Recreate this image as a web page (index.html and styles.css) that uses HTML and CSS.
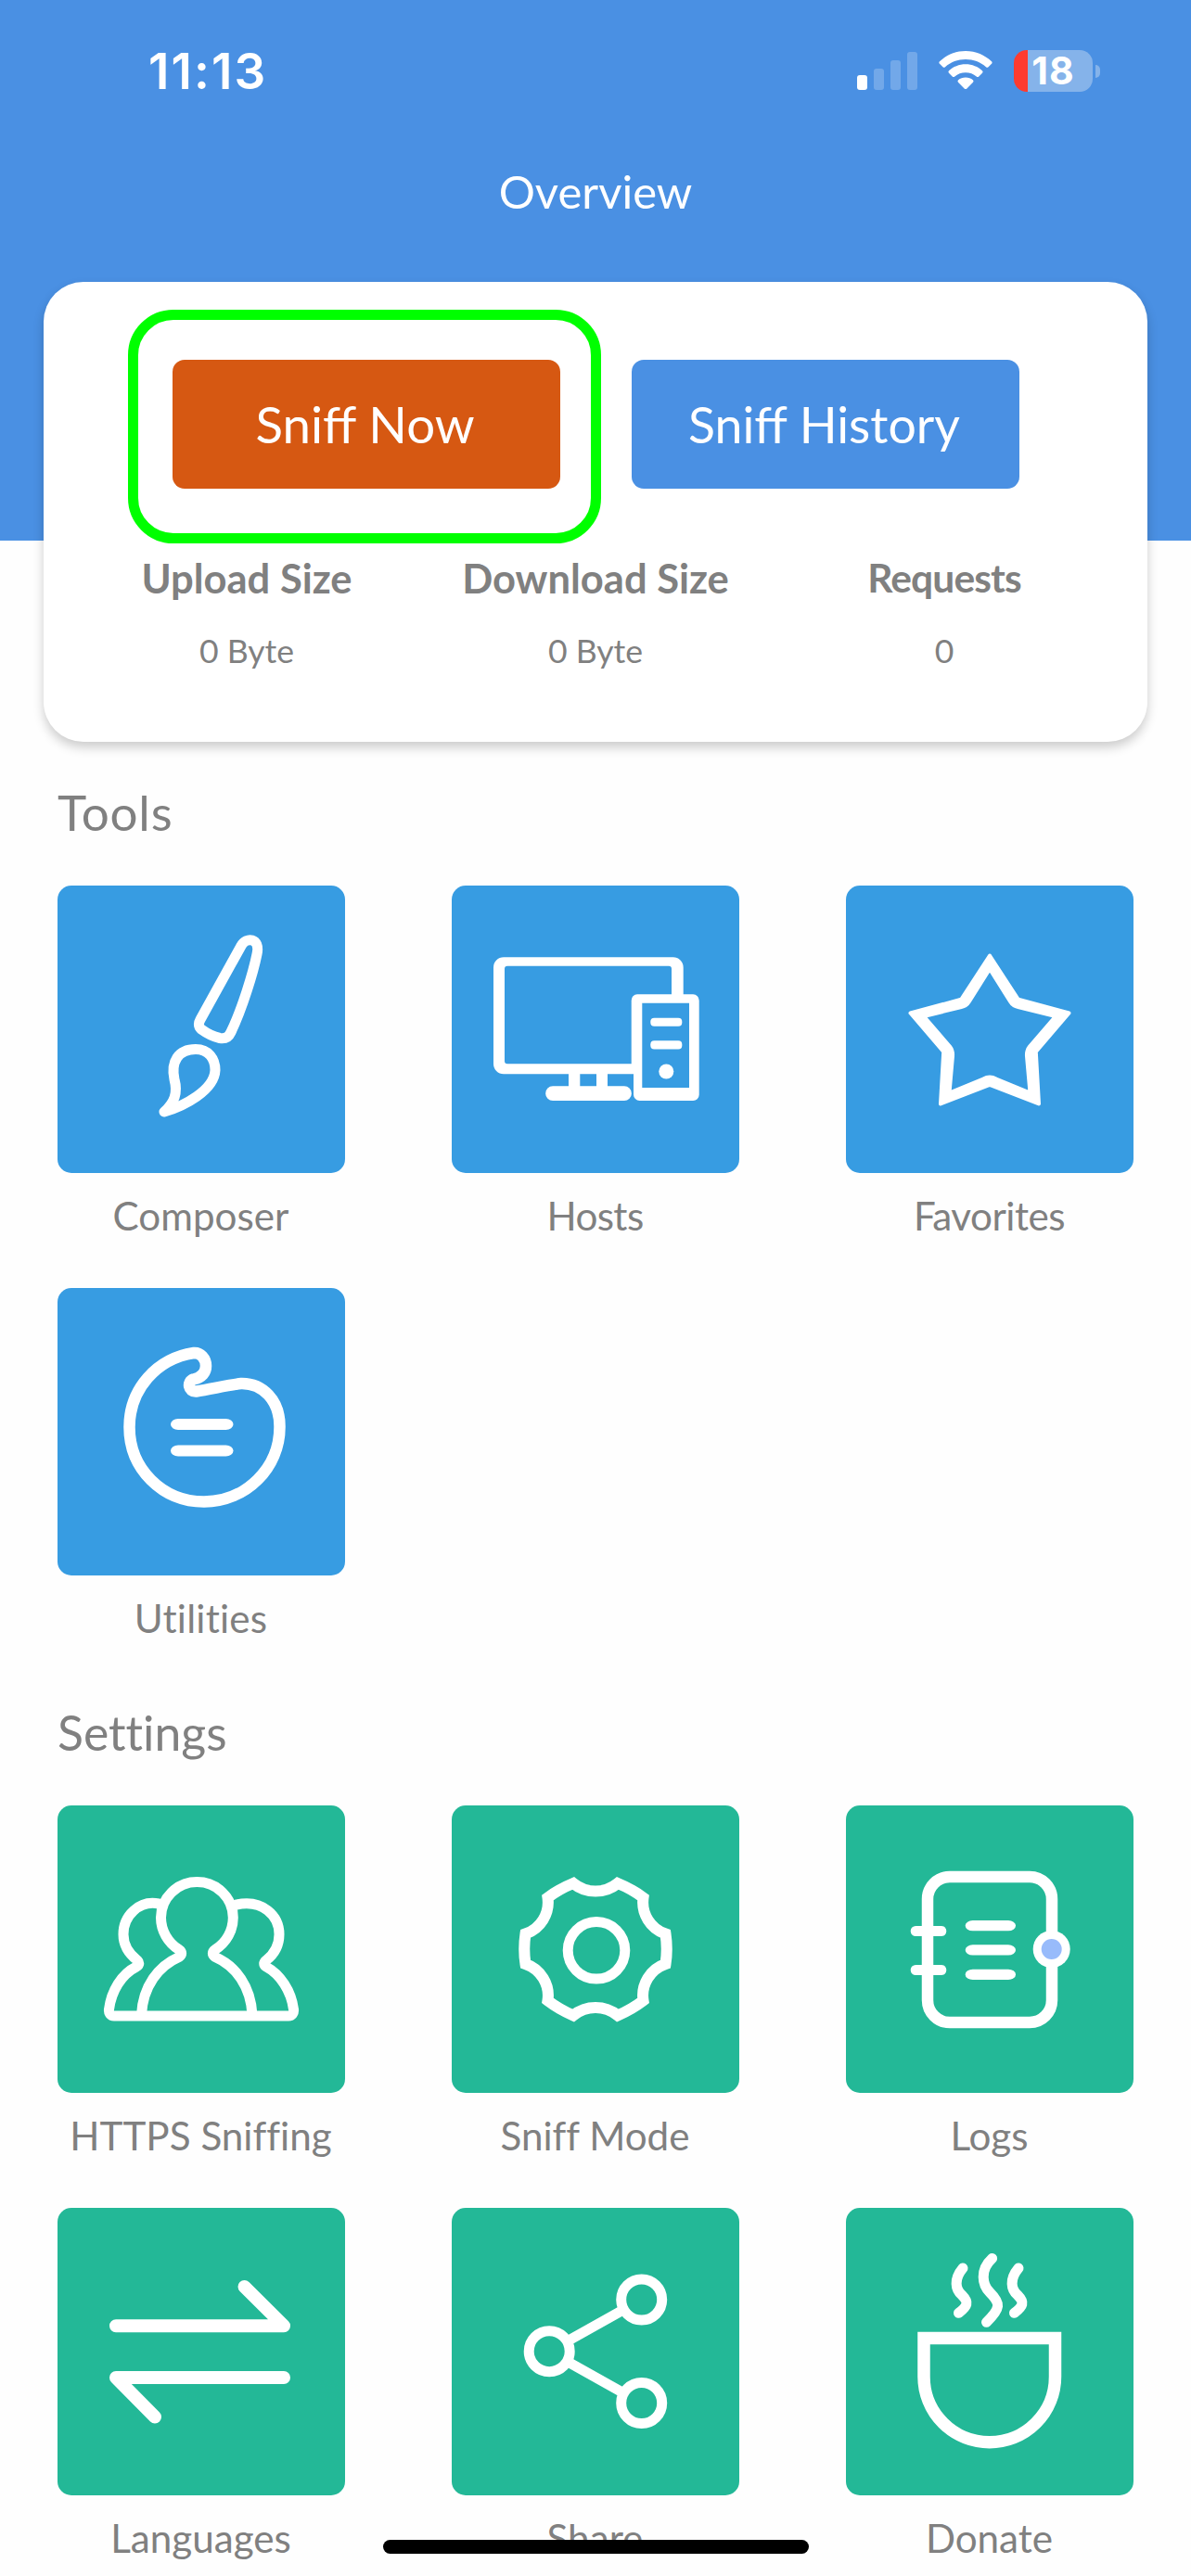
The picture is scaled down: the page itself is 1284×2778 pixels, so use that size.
FILE: index.html
```html
<!DOCTYPE html>
<html lang="en">
<head>
<meta charset="utf-8">
<title>Overview</title>
<link rel="stylesheet" href="styles.css">
</head>
<body>
<header class="top">
  <div class="status">
    <span class="time">11:13</span>
    <div class="indicators">
      <svg class="signal" width="65" height="41" viewBox="0 0 65 41" fill="#fff">
        <rect x="0" y="25" width="11" height="16" rx="3"/>
        <g opacity=".22"><rect x="18" y="18" width="11" height="23" rx="3"/><rect x="36" y="9" width="11" height="32" rx="3"/><rect x="54" y="0" width="11" height="41" rx="3"/></g>
      </svg>
      <svg class="wifi" width="58" height="42" viewBox="0 0 58 42" fill="#fff">
        <path d="M29 0C40 0 50 4.500 57 11.300Q58.200 12.500 57 13.800L53.500 17.200Q52.300 18.300 51 17.200C45 11.800 37.500 9 29 9S13 11.800 7 17.200Q5.700 18.300 4.500 17.200L1 13.800Q-.2 12.500 1 11.300C8 4.500 18 0 29 0Z"/>
        <path d="M29 14.300C36 14.300 42.300 17 47 21.200Q48.300 22.500 47 23.800L43.300 27.400Q42 28.600 40.700 27.400C37.500 24.700 33.500 23.200 29 23.200S20.500 24.700 17.300 27.400Q16 28.600 14.700 27.400L11 23.800Q9.700 22.500 11 21.200C15.700 17 22 14.300 29 14.300Z"/>
        <path d="M29 28.500C32 28.500 34.800 29.500 36.900 31.300Q38.200 32.500 37 33.700L30.400 40.400Q29 41.700 27.600 40.400L21 33.700Q19.800 32.500 21.100 31.300C23.200 29.500 26 28.500 29 28.500Z"/>
      </svg>
      <div class="battery"><span class="charge">18</span></div>
    </div>
  </div>
  <h1 class="title">Overview</h1>
</header>

<section class="card">
  <div class="actions">
    <button class="button sniff-now">Sniff Now</button>
    <button class="button sniff-history">Sniff History</button>
  </div>
  <div class="stats">
    <div class="stat"><b class="stat-name">Upload Size</b><span class="stat-value">0 Byte</span></div>
    <div class="stat"><b class="stat-name">Download Size</b><span class="stat-value">0 Byte</span></div>
    <div class="stat"><b class="stat-name narrow">Requests</b><span class="stat-value">0</span></div>
  </div>
</section>

<main class="content">
  <section class="group">
    <h2 class="heading heading-tools">Tools</h2>
    <div class="grid">
      <div class="item">
        <svg class="tile blue" viewBox="0 0 310 310">
          <path class="line" d="M198 65C203 55 219 56 215 74C211 94 199 133 187 158C184.500 163.500 181 165.500 175 164.500C168 163 160.500 159 155 155C152 152 151.500 149 154 144.500Z"/>
          <path class="line" d="M115 244C126 234 130 224 126 209C122 190 130 176.500 149 176.500C163 176.500 170 187 170 199C169 221 136 238 115 244Z"/>
        </svg>
        <span class="label">Composer</span>
      </div>
      <div class="item">
        <svg class="tile blue" viewBox="0 0 310 310">
          <path fill="#fff" fill-rule="evenodd" d="M56 77.300H238.500A11 11 0 0 1 249.700 88.500V120H237V89.700A3 3 0 0 0 234 86.700H60A3 3 0 0 0 57 89.700V189.300A3 3 0 0 0 60 192.300H200V203.300H56A11 11 0 0 1 45 192V88.500A11 11 0 0 1 56 77.300Z"/>
          <path fill="#fff" d="M126 203H138.300V216.300H156V203H168V216.300H186A7.800 7.800 0 0 1 186 232H109A7.800 7.800 0 0 1 109 216.300H126Z"/>
          <path fill="#fff" fill-rule="evenodd" d="M200 117.300H260A6.500 6.500 0 0 1 266.700 124V225.500A6.500 6.500 0 0 1 260 232H202.500A6.500 6.500 0 0 1 196 225.500V202H193.700V124A6.500 6.500 0 0 1 200 117.300ZM205.300 126.700V218H256V126.700Z"/>
          <g fill="#fff"><rect x="214.300" y="142.700" width="34" height="9" rx="4"/><rect x="214.300" y="167.300" width="34" height="9.300" rx="4"/><circle cx="231.300" cy="200.500" r="8"/></g>
        </svg>
        <span class="label hosts">Hosts</span>
      </div>
      <div class="item">
        <svg class="tile blue" viewBox="0 0 310 310">
          <path fill="#fff" stroke="#fff" stroke-width="4" stroke-linejoin="round" fill-rule="evenodd" d="M155 75.500L185.800 122.800L240.500 137.500L204.800 179.300L208 235.500L155 214.800L102 235.500L105.200 179.300L69.500 137.500L124.200 122.800ZM155 90L133 125Q130 130 124.500 131L84 141L112 173.500Q115.500 178 115 184L111.500 223.500L148 208.500Q155 204.500 162 208.500L198.500 223.500L195 184Q194.500 178 198 173.500L226 141L185.500 131Q180 130 177 125Z"/>
        </svg>
        <span class="label favorites">Favorites</span>
      </div>
      <div class="item">
        <svg class="tile blue" viewBox="0 0 310 310">
          <path class="line thick" d="M147 70C107 76 77.500 109 77.500 150C77.500 195 113 230.500 158 230.500C203 230.500 240 194 239.500 149C239.500 121 221 102.500 198 103C188 104 165 109 149.500 111.500C141 112 139.500 101 146.500 98.500C156 96.500 160 91 160 84C160 76 154 69.500 147 70Z"/>
          <g fill="#fff"><rect x="122" y="141" width="67.500" height="12" rx="8" ry="6"/><rect x="122" y="169.500" width="67.500" height="12" rx="8" ry="6"/></g>
        </svg>
        <span class="label utilities">Utilities</span>
      </div>
    </div>
  </section>

  <section class="group">
    <h2 class="heading">Settings</h2>
    <div class="grid">
      <div class="item">
        <svg class="tile green" viewBox="0 0 310 310">
          <path class="line" d="M109 106C88 102 71 119 71 139C71 151 77 160 86 167C88.500 169.500 88.500 172 85 174C69 182 58 200 55.500 220C55 224 57 227 61 227H249C253 227 255 224 254.500 220C252 200 240 182 225 174C222 172 222 169.500 225 167C234 160 239 151 239 139C239 119 221 101 193 107"/>
          <path class="line" d="M90.500 226C92 195 109 173 131 163.500C134.500 161 134.500 158 131 155.500C119 148 111.500 135 111.500 121A38.900 38.500 0 0 1 189.300 121C189.300 135 182 148 170 155.500C166.500 158 166.500 161 170 163.500C192 173 208.500 195 210 226"/>
        </svg>
        <span class="label">HTTPS Sniffing</span>
      </div>
      <div class="item">
        <svg class="tile green" viewBox="0 0 310 310">
          <path class="line sharp" d="M131 84A38 38 0 0 0 179 84Q194 90 206.500 99.500A36 36 0 0 0 230.500 138.500Q233 155 230.500 171A36 36 0 0 0 206.500 210.500Q194 220 179 226.500A38 38 0 0 0 131 226.500Q116 220 103.500 210.500A36 36 0 0 0 79.500 171Q77 155 79.500 138.500A36 36 0 0 0 103.500 99.500Q116 90 131 84Z"/>
          <circle class="line" cx="156" cy="156.300" r="30.800"/>
        </svg>
        <span class="label">Sniff Mode</span>
      </div>
      <div class="item">
        <svg class="tile green" viewBox="0 0 310 310">
          <rect class="line thick" x="88" y="77" width="134" height="157" rx="24"/>
          <g fill="#fff"><rect x="69.700" y="130" width="38.600" height="11" rx="5.500"/><rect x="69.700" y="172" width="38.600" height="11" rx="5.500"/><rect x="128.700" y="124" width="54.300" height="11.300" rx="8" ry="5.600"/><rect x="128.700" y="150.300" width="54.300" height="11.300" rx="8" ry="5.600"/><rect x="128.700" y="176.700" width="54.300" height="11.300" rx="8" ry="5.600"/><circle cx="221.700" cy="155" r="20"/></g>
          <circle cx="221.700" cy="155" r="11" fill="#98bbfb"/>
        </svg>
        <span class="label">Logs</span>
      </div>
      <div class="item">
        <svg class="tile green" viewBox="0 0 310 310">
          <path class="line arrow" d="M63 127.300H244L201.500 85M244 183H63L105 225.500"/>
        </svg>
        <span class="label">Languages</span>
      </div>
      <div class="item">
        <svg class="tile green" viewBox="0 0 310 310">
          <g class="line"><circle cx="105.200" cy="154.700" r="22"/><circle cx="204.700" cy="99" r="22"/><circle cx="204.700" cy="210.500" r="22"/><path d="M126 143L184 110.500M126 166.500L184 199"/></g>
        </svg>
        <span class="label">Share</span>
      </div>
      <div class="item">
        <svg class="tile green" viewBox="0 0 310 310">
          <path class="line cup" d="M84 140.600H225.500V182A70.700 70.700 0 0 1 84 182Z"/>
          <path class="line" d="M126 65C116 77 118 88 125 94C133 102 131 106 121.500 113.300M157.600 54.500C144 67 147 83 155 91C167 103 167 108 151.500 123.300M186 65C176 77 178 88 185 94C193 102 191 106 181.500 113.300"/>
        </svg>
        <span class="label">Donate</span>
      </div>
    </div>
  </section>
</main>
<div class="home-indicator"></div>
</body>
</html>
```
FILE: styles.css
```css
body {
  margin: 0;
  width: 1284px;
  height: 2778px;
  overflow: hidden;
  position: relative;
  background: #fefefe;
  color: #808080;
  font-family: Lato, "Open Sans", sans-serif;
  font-variant-ligatures: none;
}

.top {
  height: 583px;
  box-sizing: border-box;
  padding-top: 44px;
  background: #4a90e3;
  color: #fff;
}

.status {
  height: 64px;
  padding: 0 98px 0 160px;
  display: flex;
  justify-content: space-between;
  align-items: center;
}

.time {
  font: 600 53px/64px Inter, sans-serif;
  letter-spacing: 2.1px;
  padding-top: 2px;
}

.indicators {
  display: flex;
  align-items: center;
  gap: 23px;
}

.battery {
  width: 85px;
  height: 45px;
  margin-right: 8px;
  border-radius: 14px;
  background: linear-gradient(90deg, #ff3b30 15px, #85b3ea 15px);
  position: relative;
}

.battery::after {
  content: "";
  position: absolute;
  left: 88px;
  top: 16px;
  width: 5px;
  height: 14px;
  border-radius: 0 5px 5px 0;
  background: #85b3ea;
}

.charge {
  display: block;
  text-align: center;
  font: 700 41px/45px Inter, sans-serif;
  letter-spacing: 1px;
}

.title {
  margin: 68px 0 0;
  font-size: 49px;
  line-height: 60px;
  font-weight: 400;
  text-align: center;
}

.card {
  position: relative;
  box-sizing: border-box;
  width: 1190px;
  height: 496px;
  margin: -279px auto 0;
  padding: 84px 31px 0;
  border-radius: 43px;
  background: #fff;
  box-shadow: 0 6px 12px rgba(0, 0, 0, .2);
}

.actions {
  display: flex;
  justify-content: center;
  gap: 77px;
}

.button {
  position: relative;
  width: 418px;
  height: 139px;
  padding: 0 2px 2px 0;
  border: 0;
  border-radius: 13px;
  color: #fff;
  font-family: inherit;
}

.sniff-now {
  background: #d65812;
  font-size: 54.6px;
}

/* highlight ring round the primary action */
.sniff-now::before {
  content: "";
  position: absolute;
  inset: -54px -44px -59px -48px;
  border: 11px solid #0f0;
  border-radius: 49px;
}

.sniff-history {
  background: #4a90e3;
  font-size: 53.6px;
}

.stats {
  display: grid;
  grid-template-columns: repeat(3, 1fr);
  margin-top: 70px;
  text-align: center;
}

.stat {
  display: flex;
  flex-direction: column;
  gap: 31px;
}

.stat-name {
  font-size: 43.5px;
  line-height: 52px;
}

.narrow {
  font-size: 42.5px;
  letter-spacing: -.9px;
}

.stat-value {
  font-size: 35.6px;
  line-height: 44px;
}

.content {
  display: flex;
  flex-direction: column;
  gap: 66px;
  padding: 44px 62px 0;
}

.heading {
  margin: 0 0 47px;
  font-size: 51.7px;
  line-height: 64px;
  font-weight: 400;
}

.heading-tools {
  font-size: 53px;
  letter-spacing: .8px;
}

.grid {
  display: grid;
  grid-template-columns: repeat(3, 310px);
  justify-content: space-between;
  row-gap: 53px;
}

.item {
  display: flex;
  flex-direction: column;
  align-items: center;
  gap: 21px;
}

.tile {
  width: 310px;
  height: 310px;
  border-radius: 15px;
}

.blue { background: #379ce2; }
.green { background: #23b897; }

.line {
  fill: none;
  stroke: #fff;
  stroke-width: 11px;
  stroke-linecap: round;
  stroke-linejoin: round;
}

.thick { stroke-width: 12.5px; }
.arrow { stroke-width: 14px; }
.sharp { stroke-width: 12px; stroke-linejoin: miter; }
.cup { stroke-width: 13.5px; stroke-linejoin: miter; }

.label {
  font-size: 42.2px;
  line-height: 50px;
  padding-right: 1px;
  white-space: nowrap;
}

.hosts { letter-spacing: -.6px; }
.favorites { letter-spacing: -.5px; }
.utilities { letter-spacing: .2px; }

.home-indicator {
  position: absolute;
  left: 413px;
  top: 2739px;
  width: 459px;
  height: 15px;
  border-radius: 8px;
  background: #000;
}
```
